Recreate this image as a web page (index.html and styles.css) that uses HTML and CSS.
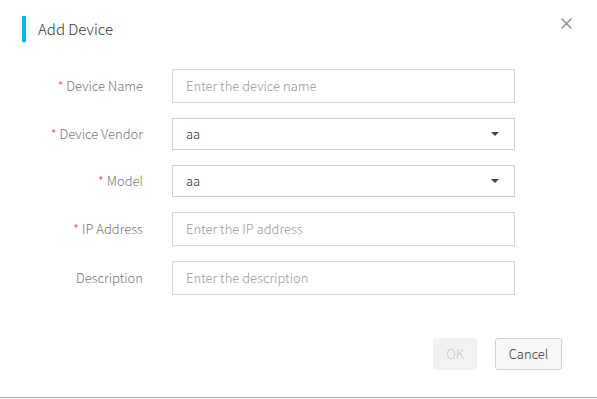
FILE: index.html
```html
<!DOCTYPE html>
<html lang="en">
<head>
    <meta charset="UTF-8">
    <meta name="viewport" content="width=device-width, initial-scale=1.0">
    <title>Add Device</title>
    <link rel="stylesheet" href="styles.css">
</head>
<body>
    <div class="dialog">
        <div class="dialog-header">
            <span class="title-bar"></span>
            <span class="title">Add Device</span>
        </div>
        <span class="close" title="Close">
            <svg width="11" height="11" viewBox="0 0 11 11"><path d="M0.5 0.5L10.5 10.5M10.5 0.5L0.5 10.5" stroke="#8a8a8a" stroke-width="1.3" fill="none"/></svg>
        </span>

        <form class="device-form">
            <label class="label"><span class="req">*</span> Device Name</label>
            <div class="field"><input class="input" type="text" placeholder="Enter the device name"></div>

            <label class="label"><span class="req">*</span> Device Vendor</label>
            <div class="field select">
                <span class="value">aa</span>
                <span class="caret"></span>
            </div>

            <label class="label"><span class="req">*</span> Model</label>
            <div class="field select">
                <span class="value">aa</span>
                <span class="caret"></span>
            </div>

            <label class="label"><span class="req">*</span> IP Address</label>
            <div class="field"><input class="input" type="text" placeholder="Enter the IP address"></div>

            <label class="label">Description</label>
            <div class="field"><input class="input" type="text" placeholder="Enter the description"></div>
        </form>

        <div class="dialog-footer">
            <button class="btn btn-ok" disabled>OK</button>
            <button class="btn btn-cancel">Cancel</button>
        </div>
    </div>
</body>
</html>
```

FILE: styles.css
```css
body {
    margin: 0;
    font-family: "Noto Sans CJK SC", "Noto Sans", sans-serif;
    font-weight: 300;
    background: #fff;
    color: #333;
}
.dialog {
    position: relative;
    width: 597px;
    height: 398px;
    box-sizing: border-box;
    border-bottom: 1px solid #a8a8a8;
}
.dialog-header {
    display: flex;
    align-items: center;
    padding: 16px 22px 0;
    height: 26px;
}
.title-bar {
    width: 4px;
    height: 26px;
    background: #00b4f5;
    margin-right: 12px;
}
.title {
    font-size: 15px;
    color: #333;
    margin-top: -1px;
}
.close {
    position: absolute;
    top: 18px;
    right: 25px;
    line-height: 0;
    cursor: pointer;
}
.device-form {
    display: grid;
    grid-template-columns: 143px 343px;
    column-gap: 29px;
    row-gap: 15px;
    padding-top: 27px;
}
.label {
    display: flex;
    align-items: center;
    justify-content: flex-end;
    font-size: 13px;
    color: #777;
    white-space: pre;
    padding-bottom: 1px;
}
.req {
    color: #f04134;
}
.field {
    height: 34px;
    box-sizing: border-box;
    border: 1px solid #d4d3db;
    display: flex;
    align-items: center;
}
.input {
    border: none;
    outline: none;
    width: 100%;
    height: 100%;
    padding: 0 13px 1px;
    font-family: inherit;
    font-weight: 300;
    font-size: 13px;
    color: #333;
    background: transparent;
}
.input::placeholder {
    color: #9a9a9a;
}
.select {
    height: 32px;
    padding: 0 15px 0 13px;
    justify-content: space-between;
    border-color: #cfcdd6;
}
.value {
    font-size: 13px;
    color: #333;
    margin-top: -1px;
}
.caret {
    width: 0;
    height: 0;
    border-left: 4px solid transparent;
    border-right: 4px solid transparent;
    border-top: 4px solid #444;
}
.dialog-footer {
    display: flex;
    justify-content: flex-end;
    gap: 18px;
    padding: 43px 35px 0 0;
}
.btn {
    height: 32px;
    font-family: inherit;
    font-weight: 300;
    font-size: 13px;
    border-radius: 3px;
    padding: 0 0 1px;
}
.btn-ok {
    width: 44px;
    background: #f2f2f2;
    border: 1px solid #f2f2f2;
    color: #c8c8c8;
}
.btn-cancel {
    width: 67px;
    background: #f7f7f7;
    border: 1px solid #d0d0d0;
    color: #333;
    cursor: pointer;
}
```
